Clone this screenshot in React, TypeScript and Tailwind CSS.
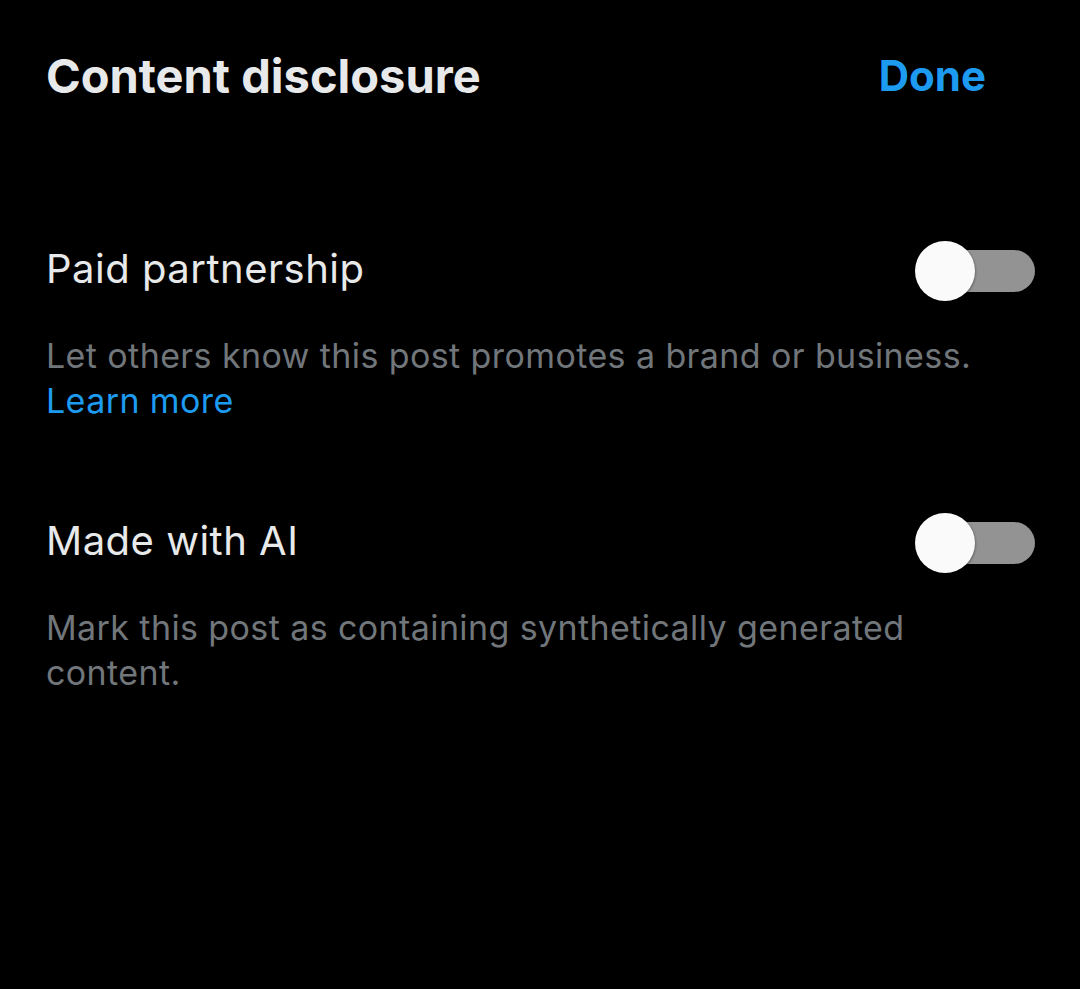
import React from "react";

function Toggle() {
  return (
    <div className="relative w-[120px] h-[62px] flex items-center shrink-0">
      <div className="ml-[10px] w-[110px] h-[42px] rounded-full bg-[#939393]" />
      <div className="absolute left-0 top-[1px] w-[60px] h-[60px] rounded-full bg-[#fafafa] shadow-[0_1px_3px_rgba(0,0,0,0.5)]" />
    </div>
  );
}

function Row({ title, desc, link }: { title: string; desc: string; link?: string }) {
  return (
    <div className="flex flex-col">
      <div className="flex items-center justify-between h-[62px]">
        <div className="text-[40px] tracking-[0.5px] text-[#e7e9ea] leading-[44px] mb-[5px]">{title}</div>
        <Toggle />
      </div>
      <div className="mt-[31px] pr-[40px] text-[34px] tracking-[0.4px] leading-[45px] text-[#71767b]">
        {desc}
        {link && (
          <>
            <br />
            <span className="text-[#1d9bf0]">{link}</span>
          </>
        )}
      </div>
    </div>
  );
}

export default function App() {
  return (
    <div
      className="w-[1080px] h-[989px] bg-black pl-[46px] pr-[45px]"
      style={{ fontFamily: "Inter, Roboto, 'Noto Sans', sans-serif" }}
    >
      <div className="flex items-center justify-between pt-[50px] pr-[49px]">
        <div className="text-[47px] font-bold text-[#e7e9ea] leading-[52px]">Content disclosure</div>
        <div className="text-[42px] font-bold text-[#1d9bf0] leading-[52px]">Done</div>
      </div>
      <div className="mt-[138px] flex flex-col gap-[89px]">
        <Row
          title="Paid partnership"
          desc="Let others know this post promotes a brand or business."
          link="Learn more"
        />
        <Row title="Made with AI" desc="Mark this post as containing synthetically generated content." />
      </div>
    </div>
  );
}
